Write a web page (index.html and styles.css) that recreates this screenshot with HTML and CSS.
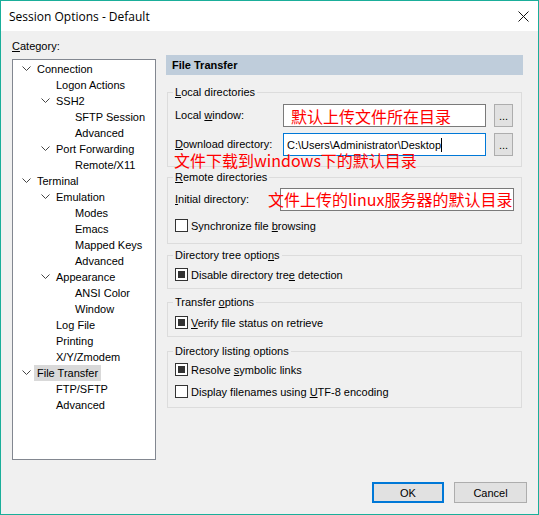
FILE: index.html
```html
<!DOCTYPE html>
<html>
<head>
<meta charset="utf-8">
<link rel="stylesheet" href="styles.css">
</head>
<body>
<div class="window">
  <div class="titlebar">
    <span class="title">Session Options - Default</span>
    <span class="close"><svg width="11" height="11" viewBox="0 0 11 11"><path d="M0.5 0.5 L10.5 10.5 M10.5 0.5 L0.5 10.5" stroke="#111" stroke-width="1" fill="none"/></svg></span>
  </div>
  <div class="body">
    <div class="sidebar">
      <div class="cat-label"><u>C</u>ategory:</div>
      <div class="tree">
        <div class="node"><span class="twisty"><svg class="chev" width="9" height="6" viewBox="0 0 9 6"><path d="M0.5 0.5 L4.5 4.5 L8.5 0.5" stroke="#444" fill="none"/></svg></span><span class="label">Connection</span></div>
        <div class="node l1"><span class="twisty"></span><span class="label">Logon Actions</span></div>
        <div class="node l1"><span class="twisty"><svg class="chev" width="9" height="6" viewBox="0 0 9 6"><path d="M0.5 0.5 L4.5 4.5 L8.5 0.5" stroke="#444" fill="none"/></svg></span><span class="label">SSH2</span></div>
        <div class="node l2"><span class="twisty"></span><span class="label">SFTP Session</span></div>
        <div class="node l2"><span class="twisty"></span><span class="label">Advanced</span></div>
        <div class="node l1"><span class="twisty"><svg class="chev" width="9" height="6" viewBox="0 0 9 6"><path d="M0.5 0.5 L4.5 4.5 L8.5 0.5" stroke="#444" fill="none"/></svg></span><span class="label">Port Forwarding</span></div>
        <div class="node l2"><span class="twisty"></span><span class="label">Remote/X11</span></div>
        <div class="node"><span class="twisty"><svg class="chev" width="9" height="6" viewBox="0 0 9 6"><path d="M0.5 0.5 L4.5 4.5 L8.5 0.5" stroke="#444" fill="none"/></svg></span><span class="label">Terminal</span></div>
        <div class="node l1"><span class="twisty"><svg class="chev" width="9" height="6" viewBox="0 0 9 6"><path d="M0.5 0.5 L4.5 4.5 L8.5 0.5" stroke="#444" fill="none"/></svg></span><span class="label">Emulation</span></div>
        <div class="node l2"><span class="twisty"></span><span class="label">Modes</span></div>
        <div class="node l2"><span class="twisty"></span><span class="label">Emacs</span></div>
        <div class="node l2"><span class="twisty"></span><span class="label">Mapped Keys</span></div>
        <div class="node l2"><span class="twisty"></span><span class="label">Advanced</span></div>
        <div class="node l1"><span class="twisty"><svg class="chev" width="9" height="6" viewBox="0 0 9 6"><path d="M0.5 0.5 L4.5 4.5 L8.5 0.5" stroke="#444" fill="none"/></svg></span><span class="label">Appearance</span></div>
        <div class="node l2"><span class="twisty"></span><span class="label">ANSI Color</span></div>
        <div class="node l2"><span class="twisty"></span><span class="label">Window</span></div>
        <div class="node l1"><span class="twisty"></span><span class="label">Log File</span></div>
        <div class="node l1"><span class="twisty"></span><span class="label">Printing</span></div>
        <div class="node l1"><span class="twisty"></span><span class="label">X/Y/Zmodem</span></div>
        <div class="node selected"><span class="twisty"><svg class="chev" width="9" height="6" viewBox="0 0 9 6"><path d="M0.5 0.5 L4.5 4.5 L8.5 0.5" stroke="#444" fill="none"/></svg></span><span class="label">File Transfer</span></div>
        <div class="node l1"><span class="twisty"></span><span class="label">FTP/SFTP</span></div>
        <div class="node l1"><span class="twisty"></span><span class="label">Advanced</span></div>
      </div>
    </div>
    <div class="panel">
      <div class="panel-header">File Transfer</div>

      <div class="group g-local">
        <div class="legend"><u>L</u>ocal directories</div>
        <div class="field">
          <span class="field-label">Local <u>w</u>indow:</span>
          <div class="input"><span class="annot-inline">默认上传文件所在目录</span></div>
          <button class="browse">...</button>
        </div>
        <div class="field">
          <span class="field-label"><u>D</u>ownload directory:</span>
          <div class="input input-focus"><span class="caret">C:\Users\Administrator\Desktop</span></div>
          <button class="browse">...</button>
        </div>
        <div class="note note-download">文件下载到windows下的默认目录</div>
      </div>

      <div class="group g-remote">
        <div class="legend"><u>R</u>emote directories</div>
        <div class="field">
          <span class="field-label field-label-narrow"><u>I</u>nitial directory:</span>
          <div class="input input-wide"></div>
        </div>
        <div class="check"><span class="box"></span><span>Synchronize file <u>b</u>rowsing</span></div>
        <div class="note note-remote">文件上传的linux服务器的默认目录</div>
      </div>

      <div class="group g-tree">
        <div class="legend">Directory tree optio<u>n</u>s</div>
        <div class="check"><span class="box on"></span><span>Disable directory tre<u>e</u> detection</span></div>
      </div>

      <div class="group g-transfer">
        <div class="legend">Transfer <u>o</u>ptions</div>
        <div class="check"><span class="box on"></span><span><u>V</u>erify file status on retrieve</span></div>
      </div>

      <div class="group g-listing">
        <div class="legend">Directory listin<u>g</u> options</div>
        <div class="check"><span class="box on"></span><span>Resolve <u>s</u>ymbolic links</span></div>
        <div class="check"><span class="box"></span><span>Display filenames using <u>U</u>TF-8 encoding</span></div>
      </div>
    </div>
  </div>
  <div class="footer">
    <button class="btn btn-default">OK</button>
    <button class="btn btn-cancel">Cancel</button>
  </div>
</div>
</body>
</html>
```

FILE: styles.css
```css
html, body {
  margin: 0;
  padding: 0;
  background: #f0f0f0;
}

.window {
  width: 539px;
  height: 515px;
  box-sizing: border-box;
  border: 1px solid #1aae9a;
  background: #f0f0f0;
  display: flex;
  flex-direction: column;
  font-family: "Liberation Sans", Arial, sans-serif;
  font-size: 11px;
  color: #000;
}

.titlebar {
  height: 30px;
  flex: none;
  background: #fff;
  display: flex;
  align-items: center;
  justify-content: space-between;
  padding: 0 9px 0 8px;
}

.title {
  font-family: "Open Sans", "Liberation Sans", sans-serif;
  font-size: 12px;
  color: #000;
}

.close {
  display: flex;
  width: 11px;
  height: 11px;
}

.body {
  flex: 1;
  display: flex;
  gap: 10px;
  padding-left: 11px;
}

.sidebar {
  width: 144px;
  flex: none;
  padding-top: 8px;
}

.cat-label {
  height: 14px;
  line-height: 14px;
  margin-bottom: 6px;
}

.tree {
  height: 401px;
  box-sizing: border-box;
  border: 1px solid #828790;
  background: #fff;
  padding-top: 1px;
}

.node {
  height: 16px;
  display: flex;
  align-items: center;
  white-space: nowrap;
}

.node.l1 { padding-left: 19px; }
.node.l2 { padding-left: 38px; }

.twisty {
  width: 21px;
  height: 16px;
  flex: none;
  box-sizing: border-box;
  padding-left: 9px;
  display: flex;
  align-items: center;
}

.chev { display: block; }

.label {
  padding: 0 3px;
  line-height: 16px;
}

.node.selected .label {
  background: #d9d9d9;
}

.panel {
  width: 357px;
  flex: none;
  padding-top: 24px;
}

.panel-header {
  height: 20px;
  background: #bfcddb;
  font-weight: bold;
  padding-left: 6px;
  display: flex;
  align-items: center;
}

.group {
  position: relative;
  margin: 0 1px;
  border: 1px solid #dcdcdc;
  padding-left: 7px;
  padding-right: 7px;
  display: flex;
  flex-direction: column;
}

.legend {
  position: absolute;
  top: -7px;
  left: 5px;
  padding: 0 2px;
  line-height: 13px;
  background: #f0f0f0;
  white-space: nowrap;
}

.g-local { margin-top: 17px; padding-top: 11px; padding-bottom: 10px; gap: 6px; }
.g-remote { margin-top: 10px; padding-top: 10px; padding-bottom: 11px; gap: 8px; }
.g-tree { margin-top: 11px; padding-top: 12px; padding-bottom: 7px; }
.g-transfer { margin-top: 13px; padding-top: 13px; padding-bottom: 7px; }
.g-listing { margin-top: 14px; padding-top: 11px; padding-bottom: 9px; gap: 9px; }

.field {
  height: 23px;
  display: flex;
  align-items: center;
}

.field-label {
  width: 108px;
  flex: none;
  white-space: nowrap;
  line-height: 12px;
  padding-bottom: 2px;
}

.field-label-narrow { width: 105px; }

.input {
  width: 203px;
  height: 23px;
  flex: none;
  box-sizing: border-box;
  border: 1px solid #7a7a7a;
  background: #fff;
  display: flex;
  align-items: center;
  padding-left: 3px;
  white-space: nowrap;
  overflow: hidden;
}

.input-focus { border-color: #0078d7; }
.input-wide { width: 234px; }

.caret {
  border-right: 1px solid #000;
  line-height: 14px;
}

.annot-inline {
  color: #ff0000;
  font-family: "Noto Sans CJK SC", sans-serif;
  font-size: 16px;
  line-height: 20px;
  padding-left: 4px;
}

.browse {
  width: 19px;
  height: 23px;
  margin-left: 8px;
  flex: none;
  box-sizing: border-box;
  border: 1px solid #adadad;
  background: #e1e1e1;
  font-family: inherit;
  font-size: 11px;
  padding: 0;
  color: #000;
}

.note {
  position: absolute;
  color: #ff0000;
  font-family: "Noto Sans CJK SC", sans-serif;
  font-size: 16px;
  line-height: 16px;
  white-space: nowrap;
}

.note-download { left: 6px; top: 59px; }
.note-remote { left: 100px; top: 13px; }

.check {
  height: 13px;
  display: flex;
  align-items: center;
  white-space: nowrap;
}

.box {
  width: 13px;
  height: 13px;
  flex: none;
  box-sizing: border-box;
  border: 1px solid #333;
  background: #fff;
  margin-right: 3px;
  padding: 2px;
}

.box.on::after {
  content: "";
  display: block;
  width: 7px;
  height: 7px;
  background: #333;
}

.footer {
  flex: none;
  display: flex;
  justify-content: flex-end;
  gap: 10px;
  padding: 0 11px 11px 0;
}

.btn {
  height: 21px;
  box-sizing: border-box;
  background: #e1e1e1;
  border: 1px solid #adadad;
  font-family: inherit;
  font-size: 11px;
  color: #000;
  padding: 0;
}

.btn-default {
  width: 72px;
  border: 2px solid #0078d7;
}

.btn-cancel { width: 73px; }
```
